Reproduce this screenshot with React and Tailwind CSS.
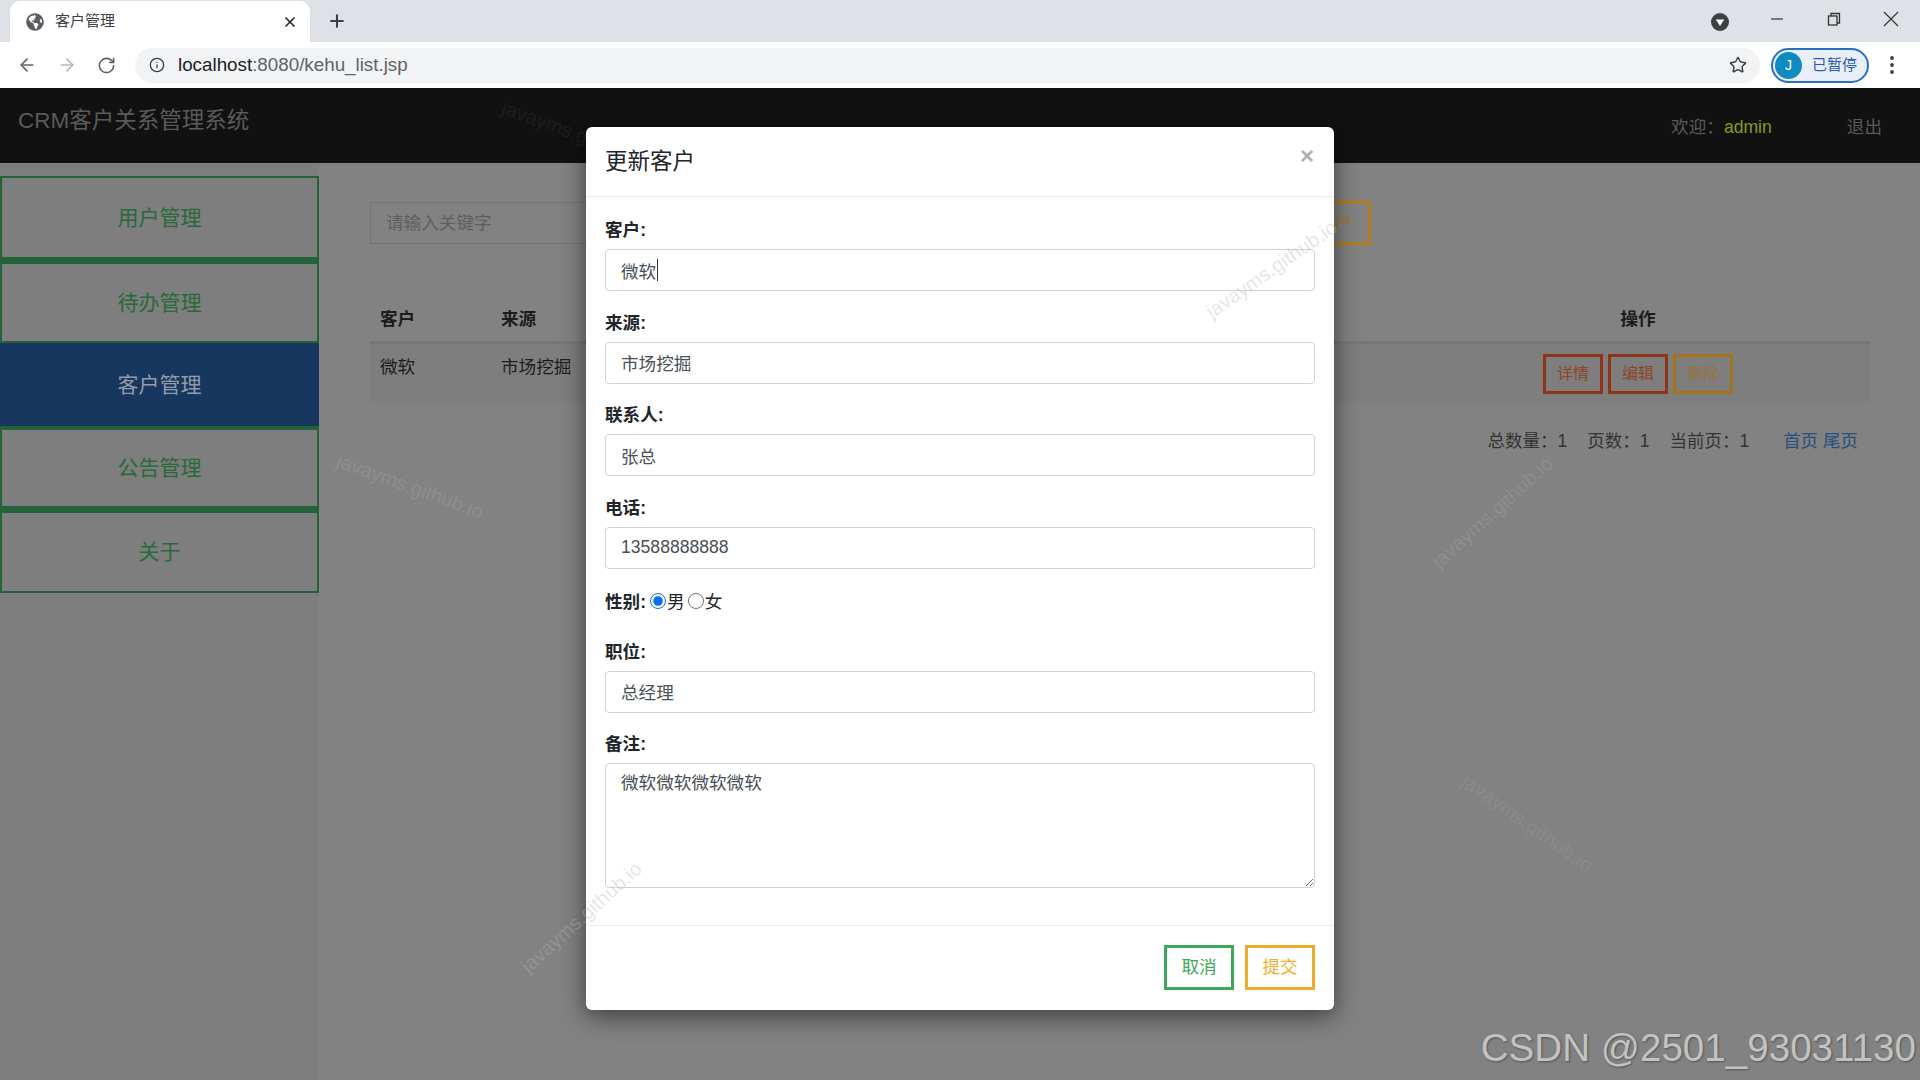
import { ArrowLeft, ArrowRight, Info, RotateCw, Star, X, Plus } from "lucide-react";
import { FaGlobeAmericas } from "react-icons/fa";

const NAV = [
  { label: "用户管理", cls: "border-b-[5px] h-[86px]" },
  { label: "待办管理", cls: "h-[81px]" },
  { label: "客户管理", active: true, cls: "h-[85px]" },
  { label: "公告管理", cls: "border-b-[5px] h-[83px]" },
  { label: "关于", cls: "h-[82px]" },
];

const FIELDS_TOP = [
  { label: "客户:", value: "微软", caret: true },
  { label: "来源:", value: "市场挖掘" },
  { label: "联系人:", value: "张总" },
  { label: "电话:", value: "13588888888" },
];

const MARKS = [
  "left-[333px] top-[383px] rotate-[20deg] text-[#8e8e8e]",
  "left-[1415px] top-[409px] rotate-[-42deg] text-[#8e8e8e]",
  "left-[1450px] top-[720px] rotate-[35deg] text-[#8a8a8a]",
  "left-[498px] top-[30px] rotate-[20deg] text-[#1d1d1d]",
];

function Field({ label, value, caret }) {
  return (
    <div className="mb-[16.5px]">
      <FieldLabel>{label}</FieldLabel>
      <div className="relative">
        <input
          readOnly
          value={value}
          className="h-[42px] w-full rounded-[4px] border border-[#ced4da] bg-white px-[15px] text-[17.6px] text-[#495057] outline-none"
        />
        {caret && (
          <span className="absolute left-[52px] top-[10px] h-[22px] w-px bg-[#333]" />
        )}
      </div>
    </div>
  );
}

function FieldLabel({ children }) {
  return (
    <label className="mb-[7px] block h-[27px] text-[17.6px] leading-[31px] font-bold text-[#212529]">
      {children}
    </label>
  );
}

function Watermark({ cls }) {
  return (
    <span className={`absolute text-[20px] whitespace-nowrap ${cls}`}>
      javayms.github.io
    </span>
  );
}

function BrowserChrome() {
  return (
    <div className="h-[88px] shrink-0 bg-white">
      <div className="flex h-[42px] bg-[#dee1e6]">
        <div className="ml-[10px] mt-[1px] flex h-[41px] w-[300px] items-center rounded-t-[10px] bg-white pl-[16px] pr-[12px]">
          <FaGlobeAmericas className="text-[#5a5e63]" size={18} />
          <span className="ml-[11px] text-[15px] text-[#3c4043]">客户管理</span>
          <X className="ml-auto text-[#202124]" size={16} strokeWidth={2.5} />
        </div>
        <Plus className="ml-[17px] mt-[11px] text-[#3c4043]" size={20} strokeWidth={2.5} />
        <div className="ml-auto flex items-center pr-[20px]">
          <svg width="20" height="20" viewBox="0 0 20 20" className="mt-[2px]">
            <circle cx="10" cy="10" r="9" fill="#3c4043" />
            <path d="M5.8 7.5h8.4L10 14z" fill="#fff" />
          </svg>
          <svg width="16" height="16" viewBox="0 0 16 16" className="ml-[39px] mb-[4px]">
            <path d="M2 8h12" stroke="#333" strokeWidth="1.2" />
          </svg>
          <svg width="16" height="16" viewBox="0 0 16 16" className="ml-[41px] mb-[4px]" fill="none" stroke="#333" strokeWidth="1.3">
            <rect x="2.5" y="5" width="8.5" height="9" />
            <path d="M5 5V2.5h8.5V12H11" />
          </svg>
          <svg width="18" height="18" viewBox="0 0 18 18" className="ml-[40px] mb-[4px]" fill="none" stroke="#333" strokeWidth="1.2">
            <path d="M2 2l14 14M16 2L2 16" />
          </svg>
        </div>
      </div>
      <div className="flex h-[46px] items-center">
        <ArrowLeft className="ml-[17px] text-[#5f6368]" size={20} strokeWidth={2} />
        <ArrowRight className="ml-[20px] text-[#b6b8bb]" size={20} strokeWidth={2} />
        <RotateCw className="ml-[20px] text-[#5f6368]" size={19} strokeWidth={2} />
        <div className="ml-[19px] flex h-[35px] w-[1625px] items-center rounded-full bg-[#f1f3f4] pl-[14px]">
          <Info className="text-[#3c4043]" size={16} strokeWidth={2} />
          <span className="ml-[13px] text-[18.8px] text-[#5f6368]">
            <span className="text-[#202124]">localhost</span>:8080/kehu_list.jsp
          </span>
          <Star className="ml-auto mr-[13px] text-[#3c4043]" size={18} strokeWidth={2} />
        </div>
        <div className="ml-[11px] flex h-[35px] w-[98px] items-center rounded-full border-2 border-[#2a6fc4] bg-[#e8eefa] pl-[2px]">
          <span className="flex h-[27px] w-[27px] items-center justify-center rounded-full bg-[#0f8bbf] text-[14px] text-white">
            J
          </span>
          <span className="ml-[10px] text-[15px] text-[#2b5ca8]">已暂停</span>
        </div>
        <svg width="6" height="20" viewBox="0 0 6 20" className="ml-[20px]">
          <circle cx="3" cy="3" r="1.9" fill="#3c4043" />
          <circle cx="3" cy="10" r="1.9" fill="#3c4043" />
          <circle cx="3" cy="17" r="1.9" fill="#3c4043" />
        </svg>
      </div>
    </div>
  );
}

function Sidebar() {
  return (
    <aside className="w-[319px] shrink-0 bg-[#7e7e7e] pt-[13px]">
      {NAV.map((n) => (
        <div
          key={n.label}
          className={`flex items-center justify-center border-2 border-[#24633a] text-[21px] ${n.cls} ${
            n.active ? "border-x-0 border-t-0 bg-[#17375f] text-[#929cab]" : "text-[#286a3b]"
          }`}
        >
          {n.label}
        </div>
      ))}
    </aside>
  );
}

function ActionBtn({ label, cls }) {
  return (
    <button className={`h-[40px] w-[60px] border-[3px] text-[16px] ${cls}`}>{label}</button>
  );
}

function Content() {
  return (
    <main className="flex-1 bg-[#828282] pl-[51px] pr-[50px] pt-[38px]">
      <div className="flex h-[44px] w-[1001px] items-center gap-[10px]">
        <input
          readOnly
          placeholder="请输入关键字"
          className="h-[42px] flex-1 border border-[#747474] bg-transparent px-[15px] text-[17.6px] outline-none placeholder:text-[#5f5f5f]"
        />
        <button className="h-[44px] w-[108px] border-[3px] border-[#b37d1c] text-[17.6px] text-[#a87a2a]">
          添加客户
        </button>
      </div>

      <table className="mt-[49px] w-full table-fixed text-[17.6px] text-[#1c1c1c]">
        <colgroup>
          <col className="w-[121px]" />
          <col className="w-[121px]" />
          <col />
          <col className="w-[464px]" />
        </colgroup>
        <thead>
          <tr className="h-[48px] border-b-[3px] border-[#767676]">
            <th className="px-[10px] pt-[3px] text-left font-bold">客户</th>
            <th className="px-[10px] pt-[3px] text-left font-bold">来源</th>
            <th />
            <th className="pt-[3px] text-center font-bold">操作</th>
          </tr>
        </thead>
        <tbody>
          <tr className="h-[61px] bg-[#7e7e7e]">
            <td className="px-[10px] pb-[13px]">微软</td>
            <td className="px-[10px] pb-[13px]">市场挖掘</td>
            <td />
            <td className="pt-[1px]">
              <div className="flex justify-center gap-[5px]">
                <ActionBtn label="详情" cls="border-[#8f3419] text-[#8f4528]" />
                <ActionBtn label="编辑" cls="border-[#8f3419] text-[#8f4528]" />
                <ActionBtn label="删除" cls="border-[#a5741a] text-[#97733a]" />
              </div>
            </td>
          </tr>
        </tbody>
      </table>

      <div className="mt-[25px] flex justify-end pr-[12px] text-[17.5px] leading-[26px] text-[#333]">
        <span>总数量：1</span>
        <span className="ml-[20px]">页数：1</span>
        <span className="ml-[20px]">当前页：1</span>
        <span className="ml-[34px] text-[#25507f]">首页 尾页</span>
      </div>
    </main>
  );
}

function Modal() {
  return (
    <div className="absolute inset-0 flex justify-center pt-[39px]">
      <div className="relative h-[883px] w-[748px] rounded-[6px] bg-white shadow-[0_6px_24px_rgba(0,0,0,0.55)]">
        <div className="flex h-[70px] items-center justify-between border-b border-[#e9ecef] pl-[19px] pr-[20px]">
          <h5 className="text-[22.5px] text-[#212529]">更新客户</h5>
          <span className="mb-[12px] text-[24px] font-bold leading-none text-[#b0b0b0]">×</span>
        </div>
        <div className="px-[19px] pt-[18px]">
          {FIELDS_TOP.map((f) => (
            <Field key={f.label} {...f} />
          ))}
          <div className="mb-[20px] flex h-[31.5px] items-center pt-[3px] text-[17.6px] text-[#212529]">
            <span className="font-bold">性别:</span>
            <input type="radio" readOnly checked className="mb-[3px] ml-[4px] h-[16px] w-[16px] accent-[#0b6ef6]" />
            <span className="ml-[1px]">男</span>
            <input type="radio" readOnly checked={false} className="mb-[3px] ml-[3px] h-[16px] w-[16px]" />
            <span className="ml-[1px]">女</span>
          </div>
          <Field label="职位:" value="总经理" />
          <FieldLabel>备注:</FieldLabel>
          <textarea
            readOnly
            value="微软微软微软微软"
            className="block h-[125px] w-full rounded-[4px] border border-[#ced4da] bg-white px-[15px] py-[6px] text-[17.6px] text-[#495057] outline-none"
          />
        </div>
        <div className="mt-[37px] flex justify-end gap-[11px] border-t border-[#e9ecef] px-[19px] pt-[19px]">
          <button className="h-[45px] w-[70px] border-[3px] border-[#3da75a] text-[17.6px] text-[#3da75a]">取消</button>
          <button className="h-[45px] w-[70px] border-[3px] border-[#f0ad2c] text-[17.6px] text-[#f0ad2c]">提交</button>
        </div>
        {/* watermark shows faintly through the dialog */}
        <Watermark cls="left-[608px] top-[127px] rotate-[-35deg] text-[#b4b4b4]/35" />
        <Watermark cls="left-[-82px] top-[775px] rotate-[-42deg] text-[#b4b4b4]/35" />
      </div>
    </div>
  );
}

export default function App() {
  return (
    <div className="flex h-[1080px] w-[1920px] flex-col overflow-hidden [font-family:'Liberation_Sans','Noto_Sans_CJK_SC',sans-serif]">
      <BrowserChrome />
      <div className="relative flex flex-1 flex-col">
        <header className="flex h-[75px] shrink-0 items-center bg-[#111] pl-[18px] pr-[38px] text-[#5a5a5a]">
          <span className="mb-[10px] text-[22.5px]">CRM客户关系管理系统</span>
          <span className="ml-auto mt-[4px] text-[17.6px]">
            欢迎：<span className="text-[#8a9a10]">admin</span>
          </span>
          <span className="ml-[75px] mt-[4px] text-[17.6px]">退出</span>
        </header>
        <div className="flex flex-1">
          <Sidebar />
          <Content />
        </div>
        {MARKS.map((m) => (
          <Watermark key={m} cls={m} />
        ))}
        <Modal />
        <span className="absolute bottom-[3px] right-[4px] text-[38.6px] text-[#c2c2c2] [text-shadow:1px_1px_2px_#555]">
          CSDN @2501_93031130
        </span>
      </div>
    </div>
  );
}
